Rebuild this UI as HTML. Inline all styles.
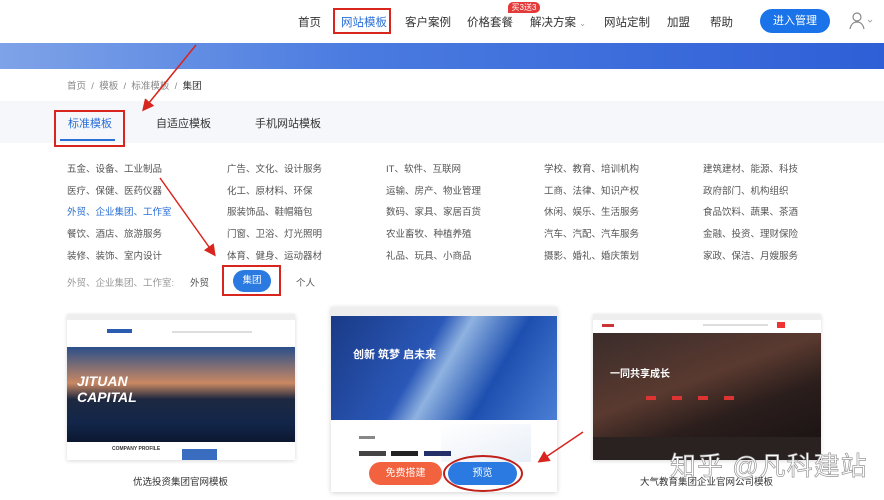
<!DOCTYPE html>
<html><head><meta charset="utf-8"><style>
*{margin:0;padding:0;box-sizing:border-box}
body{width:884px;height:500px;overflow:hidden;background:#fff;font-family:"Liberation Sans","Noto Sans CJK SC",sans-serif;position:relative;color:#333}
.a{position:absolute;white-space:nowrap}
.nav{font-size:11.5px;color:#333;top:14px}
.cat{font-size:9.5px;color:#555}
</style></head><body>
<div class="a nav" style="left:298px">首页</div>
<div class="a nav" style="left:341px;color:#2a6fd6">网站模板</div>
<div class="a" style="left:333px;top:8px;width:58px;height:26px;border:2px solid #d8261f"></div>
<div class="a nav" style="left:405px">客户案例</div>
<div class="a nav" style="left:467px">价格套餐</div>
<div class="a" style="left:508px;top:2px;width:32px;height:11px;background:#e53a3a;border-radius:5px 5px 5px 0;color:#fff;font-size:8px;line-height:11px;text-align:center">买3送3</div>
<div class="a nav" style="left:530px">解决方案 <span style="font-size:8px;color:#999">⌄</span></div>
<div class="a nav" style="left:604px">网站定制</div>
<div class="a nav" style="left:667px">加盟</div>
<div class="a nav" style="left:710px">帮助</div>
<div class="a" style="left:760px;top:9px;width:70px;height:24px;background:#1a73e8;border-radius:12px;color:#fff;font-size:11px;line-height:24px;text-align:center">进入管理</div>
<svg class="a" style="left:849px;top:12px" width="26" height="18"><circle cx="8" cy="5" r="4" fill="none" stroke="#888" stroke-width="1.2"/><path d="M1 17c1-5 4-7 7-7s6 2 7 7" fill="none" stroke="#888" stroke-width="1.2"/><path d="M19 8l2 2 2-2" fill="none" stroke="#aaa"/></svg>
<div class="a" style="left:0;top:43px;width:884px;height:26px;background:linear-gradient(90deg,#7fa3e8,#4a7be0 40%,#2f5fd6)"></div>
<div class="a" style="left:67px;top:78px;font-size:9.5px;color:#888">首页 &nbsp;/ &nbsp;模板 &nbsp;/ &nbsp;标准模板 &nbsp;/ &nbsp;<span style="color:#333">集团</span></div>
<div class="a" style="left:0;top:101px;width:884px;height:42px;background:#f5f7fa"></div>
<div class="a" style="left:68px;top:115px;font-size:11px;color:#2a6fd6">标准模板</div>
<div class="a" style="left:60px;top:139px;width:55px;height:2px;background:#2a6fd6"></div>
<div class="a" style="left:54px;top:110px;width:71px;height:37px;border:2px solid #d8261f"></div>
<div class="a" style="left:156px;top:115px;font-size:11px">自适应模板</div>
<div class="a" style="left:255px;top:115px;font-size:11px">手机网站模板</div>

<div class="a cat" style="left:67px;top:159px;line-height:21.7px">五金、设备、工业制品<br>医疗、保健、医药仪器<br><span style="color:#2a6fd6">外贸、企业集团、工作室</span><br>餐饮、酒店、旅游服务<br>装修、装饰、室内设计</div>
<div class="a cat" style="left:227px;top:159px;line-height:21.7px">广告、文化、设计服务<br>化工、原材料、环保<br>服装饰品、鞋帽箱包<br>门窗、卫浴、灯光照明<br>体育、健身、运动器材</div>
<div class="a cat" style="left:386px;top:159px;line-height:21.7px">IT、软件、互联网<br>运输、房产、物业管理<br>数码、家具、家居百货<br>农业畜牧、种植养殖<br>礼品、玩具、小商品</div>
<div class="a cat" style="left:544px;top:159px;line-height:21.7px">学校、教育、培训机构<br>工商、法律、知识产权<br>休闲、娱乐、生活服务<br>汽车、汽配、汽车服务<br>摄影、婚礼、婚庆策划</div>
<div class="a cat" style="left:703px;top:159px;line-height:21.7px">建筑建材、能源、科技<br>政府部门、机构组织<br>食品饮料、蔬果、茶酒<br>金融、投资、理财保险<br>家政、保洁、月嫂服务</div>

<div class="a cat" style="left:67px;top:275px;color:#999">外贸、企业集团、工作室:</div>
<div class="a cat" style="left:190px;top:275px">外贸</div>
<div class="a" style="left:233px;top:270px;width:38px;height:22px;background:#2a7ae2;border-radius:11px;color:#fff;font-size:9.5px;line-height:22px;text-align:center">集团</div>
<div class="a" style="left:222px;top:265px;width:59px;height:31px;border:2px solid #d8261f"></div>
<div class="a cat" style="left:296px;top:275px">个人</div>

<!-- card1 -->
<div class="a" style="left:67px;top:314px;width:228px;height:146px;background:#fff;box-shadow:0 1px 4px rgba(0,0,0,.15)">
<div style="height:6px;background:#eee"></div>
<div style="height:27px;position:relative"><div class="a" style="left:40px;top:9px;width:25px;height:4px;background:#2a5db0"></div><div class="a" style="left:105px;top:11px;width:80px;height:2px;background:#ddd"></div></div>
<div style="height:95px;background:linear-gradient(180deg,#2a4f8a 0%,#c98862 38%,#1d2840 55%,#12264a 80%,#0c1730);position:relative"><div class="a" style="left:10px;top:26px;color:#fff;font-style:italic;font-weight:bold;font-size:14px;line-height:16px">JITUAN<br>CAPITAL</div></div>
<div class="a" style="left:45px;top:132px;font-size:5px;font-weight:bold">COMPANY PROFILE</div>
<div class="a" style="left:115px;top:135px;width:35px;height:11px;background:#3a6cc0"></div>
</div>
<div class="a" style="left:133px;top:474px;font-size:9.5px">优选投资集团官网模板</div>

<!-- card2 -->
<div class="a" style="left:331px;top:307px;width:226px;height:185px;background:#fff;box-shadow:0 1px 5px rgba(0,0,0,.18)">
<div style="height:9px;background:#eee"></div>
<div style="height:104px;background:linear-gradient(120deg,#1a3a86 0%,#2a58b8 40%,#8fb2e0 50%,#1d4fb0 70%,#4b7fd5);position:relative"><div class="a" style="left:22px;top:30px;color:#fff;font-weight:bold;font-size:11px">创新 筑梦 启未来</div></div>
<div class="a" style="left:110px;top:117px;height:40px;width:90px;background:linear-gradient(160deg,#fff,#e8eef7)"></div>
<div class="a" style="left:28px;top:129px;width:16px;height:3px;background:#888"></div>
<div class="a" style="left:28px;top:144px;width:27px;height:5px;background:#444"></div><div class="a" style="left:60px;top:144px;width:27px;height:5px;background:#222"></div><div class="a" style="left:93px;top:144px;width:27px;height:5px;background:#23306a"></div>
<div class="a" style="left:0;top:155px;width:226px;height:30px;background:#fff"></div>
</div>
<div class="a" style="left:369px;top:462px;width:73px;height:23px;background:#f2623f;border-radius:12px;color:#fff;font-size:10px;line-height:23px;text-align:center">免费搭建</div>
<div class="a" style="left:448px;top:462px;width:69px;height:23px;background:#2a7ae2;border-radius:12px;color:#fff;font-size:10px;line-height:23px;text-align:center">预览</div>
<div class="a" style="left:443px;top:455px;width:80px;height:37px;border:2px solid #c0201a;border-radius:50%"></div>

<!-- card3 -->
<div class="a" style="left:593px;top:314px;width:228px;height:146px;background:#fff;box-shadow:0 1px 4px rgba(0,0,0,.15)">
<div style="height:6px;background:#eee"></div>
<div style="height:13px;position:relative"><div class="a" style="left:9px;top:4px;width:12px;height:3px;background:#c33"></div><div class="a" style="left:110px;top:4px;width:65px;height:2px;background:#ddd"></div><div class="a" style="left:184px;top:2px;width:8px;height:6px;background:#e33"></div></div>
<div style="height:104px;background:linear-gradient(160deg,#3a2c2a,#5a3a30 45%,#2b1e1c 70%,#1c1514);position:relative">
<div class="a" style="left:17px;top:32px;color:#fff;font-weight:bold;font-size:10px">一同共享成长</div>
<div class="a" style="left:53px;top:63px;width:10px;height:4px;background:#d33"></div><div class="a" style="left:79px;top:63px;width:10px;height:4px;background:#d33"></div><div class="a" style="left:105px;top:63px;width:10px;height:4px;background:#d33"></div><div class="a" style="left:131px;top:63px;width:10px;height:4px;background:#d33"></div></div>
<div style="height:23px;background:#2a2220"></div>
</div>
<div class="a" style="left:640px;top:474px;font-size:9.5px">大气教育集团企业官网公司模板</div>

<div class="a" style="left:670px;top:446px;font-size:26px;color:#fff;-webkit-text-stroke:0.7px #999;letter-spacing:1px">知乎 @凡科建站</div>

<svg class="a" style="left:0;top:0" width="884" height="500">
<defs><marker id="m" markerWidth="8" markerHeight="8" refX="6" refY="4" orient="auto"><path d="M0 0L8 4L0 8z" fill="#d8261f"/></marker></defs>
<line x1="196" y1="45" x2="144" y2="109" stroke="#d8261f" stroke-width="1.5" marker-end="url(#m)"/>
<line x1="160" y1="178" x2="214" y2="254" stroke="#d8261f" stroke-width="1.5" marker-end="url(#m)"/>
<line x1="583" y1="432" x2="540" y2="461" stroke="#d8261f" stroke-width="1.5" marker-end="url(#m)"/>
</svg>
</body></html>
